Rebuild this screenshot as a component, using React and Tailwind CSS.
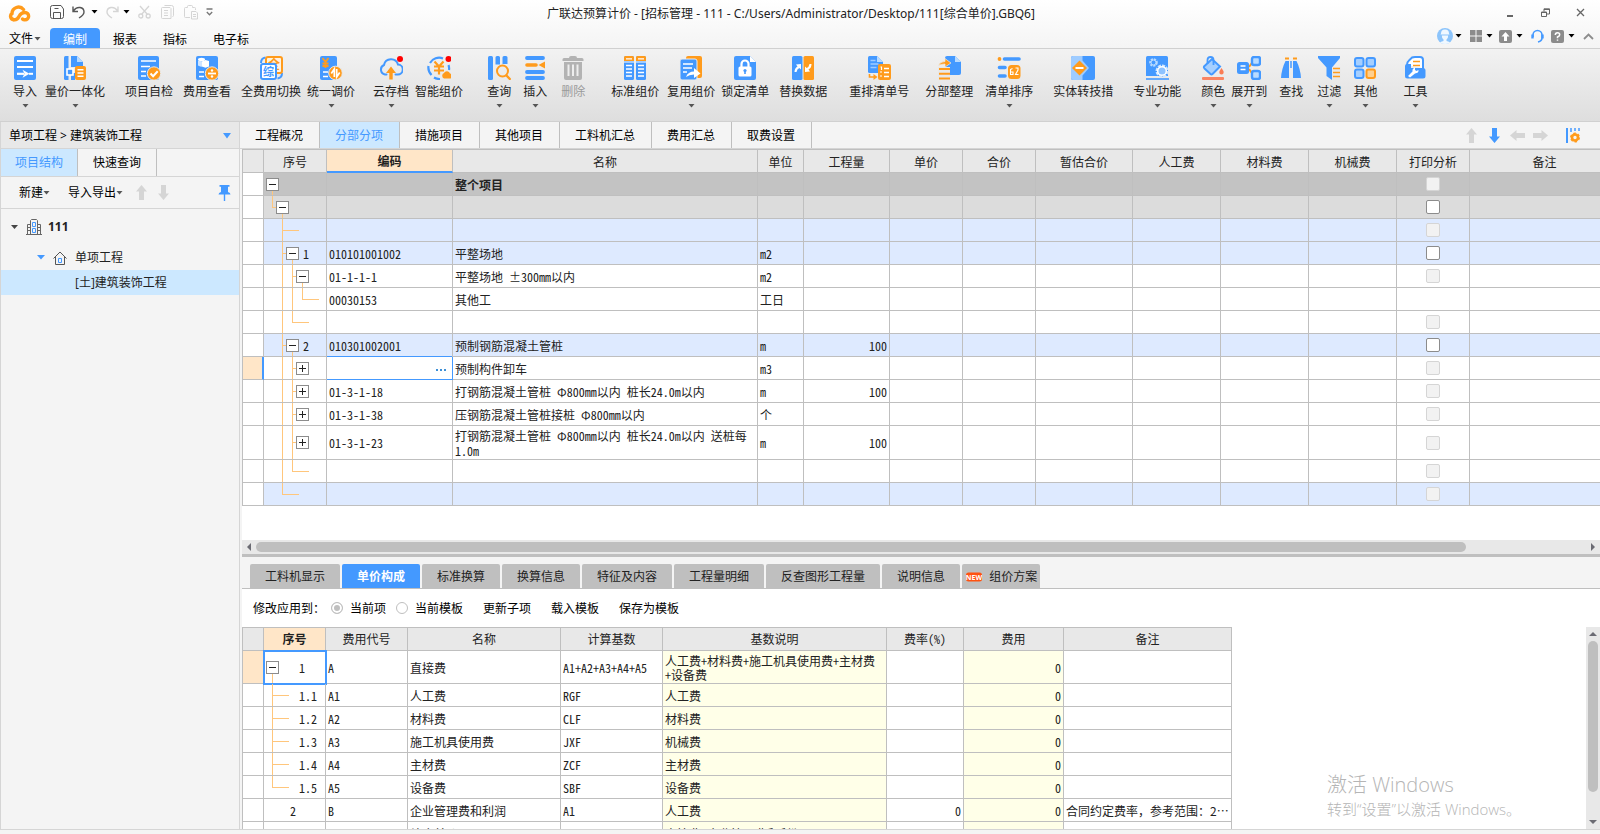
import React, { useState } from 'react'

const B = "#4499ff";
const O = "#ff9b1c";

// small down triangle under / beside buttons
const Caret = ({ className = "text-[#555]" }) => (
  <svg className={className} width="7" height="4" viewBox="0 0 7 4"><path d="M0.5 0h6L3.5 3.6z" fill="currentColor" /></svg>
)

const icons = {
  import: (
    <>
      <rect x="1" y="0" width="22" height="24" rx="2" fill={B} />
      <path d="M4 5h16M4 11h16" stroke="#fff" strokeWidth="1.8" />
      <path d="M4 17.8h7" stroke="#fff" strokeWidth="2.2" />
      <path d="M9.5 13.8l7 4-7 4 2-4z" fill="#fff" />
      <path d="M16 17.8h4" stroke="#fff" strokeWidth="2" />
    </>
  ),
  combine: (
    <>
      <path d="M1 1.5Q1 0 2.5 0H5.5V24H2.5Q1 24 1 22.5z" fill={B} />
      <path d="M8 0h6l6 6v5H8z" fill={B} />
      <path d="M14 0v6h6z" fill="#b9dbff" />
      <path d="M8 17h4v7H8z" fill={B} />
      <rect x="4" y="13" width="6" height="6" fill={B} stroke="#fff" strokeWidth="1.6" />
      <rect x="12" y="10" width="11" height="14" rx="2" fill={O} />
      <path d="M14.5 13.8h6M14.5 17h6M14.5 20.2h6" stroke="#fff" strokeWidth="1.6" />
    </>
  ),
  check: (
    <>
      <rect x="1" y="0" width="21" height="24" rx="2" fill={B} />
      <path d="M4 5h15M4 10.5h9M4 15.5h5M4 20h5" stroke="#fff" strokeWidth="1.6" />
      <circle cx="17" cy="17.5" r="6.7" fill={O} stroke="#e8e8e8" strokeWidth="1" />
      <path d="M13.5 17.5l2.6 2.7 4.6-5" stroke="#fff" strokeWidth="2" fill="none" />
    </>
  ),
  cost: (
    <>
      <rect x="1" y="0" width="22" height="24" rx="2" fill={B} />
      <ellipse cx="6.5" cy="3.5" rx="3.5" ry="1.8" fill="#fff" />
      <path d="M3 4.5v5q3 2 5 .5V5.5z" fill="#cfe5ff" />
      <path d="M7 5.5l3.5-1.5 3.5 1v5.5l-3.5 1.2L7 10.5z" fill="#fff" />
      <path d="M4 16h5M4 20.5h5" stroke="#fff" strokeWidth="1.6" />
      <circle cx="17" cy="17.5" r="6.7" fill={O} stroke="#e8e8e8" />
      <path d="M13 17.5h8" stroke="#fff" strokeWidth="1.8" />
      <circle cx="17" cy="14.5" r="1.2" fill="#fff" /><circle cx="17" cy="20.5" r="1.2" fill="#fff" />
    </>
  ),
  swap: (
    <>
      <path d="M2 7Q2 2 6.5 1.5" stroke={B} strokeWidth="2" fill="none" />
      <path d="M23 17Q23 22 18.5 22.5" stroke={B} strokeWidth="2" fill="none" />
      <rect x="7" y="1" width="16" height="16" rx="2" fill="#fff3e0" stroke={O} strokeWidth="2" />
      <text x="15" y="13" fontSize="12" fontWeight="700" fill={O} textAnchor="middle">全</text>
      <rect x="2" y="8" width="15" height="15" rx="2" fill="#fff" stroke={B} strokeWidth="2" />
      <text x="9.5" y="19.5" fontSize="11" fontWeight="700" fill={B} textAnchor="middle">综</text>
    </>
  ),
  adjust: (
    <>
      <rect x="1" y="0" width="17" height="24" rx="2" fill={B} />
      <path d="M3.5 2l3 4 3-4M6.5 6v6M3.5 7.5h6M3.5 10h6" stroke={O} strokeWidth="1.8" fill="none" />
      <path d="M4 16h5M4 20.5h5" stroke="#fff" strokeWidth="1.6" />
      <circle cx="16.5" cy="17" r="6.8" fill={O} stroke="#e8e8e8" />
      <path d="M15.3 21v-8l-3 4.5M17.7 13v8l3-4.5" stroke="#fff" strokeWidth="1.7" fill="none" />
    </>
  ),
  cloud: (
    <>
      <path d="M7.5 18.5H6A5 5 0 0 1 5 9 7.2 7.2 0 0 1 19 8.5 5 5 0 0 1 18.5 18.5H16.5" stroke={B} strokeWidth="2" fill="none" strokeLinecap="round" />
      <path d="M12 10.5l5 6.5h-3.3V23.5h-3.4V17H7z" fill={O} />
      <circle cx="21" cy="3" r="3" fill="#f00" />
    </>
  ),
  smart: (
    <>
      <path d="M16 2.5A10.5 10.5 0 0 0 3 7M1.5 10a10.5 10.5 0 0 0 3 9M7 21.5a10.5 10.5 0 0 0 6 1.5M21.5 9a10 10 0 0 1 .5 5" stroke={B} strokeWidth="2.2" fill="none" />
      <path d="M7.5 5.5l4.5 5 4.5-5M12 10.5V18.5M7 10.5h10M7 14.5h10" stroke={O} strokeWidth="2.2" fill="none" />
      <path d="M17 22.5a3 3 0 0 1 0-5.5 3.2 3.2 0 0 1 6 .5 2.6 2.6 0 0 1 .5 5z" fill={O} />
      <circle cx="21.5" cy="3" r="3" fill="#f00" />
    </>
  ),
  query: (
    <>
      <rect x="1" y="0" width="5" height="24" rx="1.5" fill={B} />
      <path d="M8.5 1.5Q8.5 0 10 0h1.5Q13 0 13 1.5V8.5H8.5zM15.5 1.5Q15.5 0 17 0h2Q20.5 0 20.5 1.5V8H15.5z" fill={B} />
      <circle cx="15.5" cy="15" r="5.5" fill="none" stroke={O} strokeWidth="2" />
      <path d="M19.5 19.5l3.3 3.5" stroke={O} strokeWidth="2.4" strokeLinecap="round" />
    </>
  ),
  insert: (
    <>
      <path d="M4 2h16M4 16h16M4 22h16" stroke={B} strokeWidth="3.8" strokeLinecap="round" />
      <path d="M4 9h9" stroke={O} strokeWidth="3.6" strokeLinecap="round" />
      <path d="M22 5.5v7L15.5 9z" fill={O} />
    </>
  ),
  trash: (
    <>
      <path d="M8 2q0-2 2-2h4q2 0 2 2h5q1.5 0 1.5 1.5V5h-21V3.5Q1.5 2 3 2z" fill="#b3b3b3" />
      <path d="M3 6h18v16q0 2-2 2H5q-2 0-2-2z" fill="#b3b3b3" />
      <path d="M7.5 8.5V20M12 8.5V20M16.5 8.5V20" stroke="#eee" strokeWidth="2" />
    </>
  ),
  standard: (
    <>
      <rect x="1" y="0" width="10" height="24" rx="1.5" fill={B} />
      <rect x="13" y="0" width="10" height="24" rx="1.5" fill={B} />
      <path d="M1 5V1.5Q1 0 2.5 0h7Q11 0 11 1.5V5zM13 5V1.5Q13 0 14.5 0h7Q23 0 23 1.5V5z" fill={O} />
      <path d="M3 2.8h6M15 2.8h6M1 6h10M13 6h10" stroke="#fff" strokeWidth="1.2" />
      <path d="M3 9.5h6M3 13h6M3 16.5h6M3 20h6M15 9.5h6M15 13h6M15 16.5h6M15 20h6" stroke="#fff" strokeWidth="1.5" />
    </>
  ),
  reuse: (
    <>
      <rect x="7" y="0" width="16" height="22" rx="2" fill={O} />
      <rect x="1" y="3" width="17" height="21" rx="2" fill={B} stroke="#ececec" strokeWidth="1" />
      <path d="M4 8h10M4 12h9M4 16h4" stroke="#fff" strokeWidth="1.6" />
      <path d="M7 21q2-5.5 8-5.5V12l6.5 5.5L15 22v-3.5q-5 0-8 2.5z" fill="#fff" />
    </>
  ),
  lock: (
    <>
      <path d="M1 2q0-2 2-2h14l6 6v16q0 2-2 2H3q-2 0-2-2z" fill={B} />
      <path d="M17 0v6h6z" fill="#fff" />
      <rect x="5.5" y="10.5" width="13" height="10" rx="1.5" fill="#fff" />
      <path d="M8.5 11V8a3.5 3.5 0 0 1 7 0v3" stroke="#fff" strokeWidth="2.2" fill="none" />
      <circle cx="12" cy="14.5" r="1.6" fill={B} /><path d="M12 15v3" stroke={B} strokeWidth="1.6" />
    </>
  ),
  replace: (
    <>
      <rect x="1" y="0" width="10.5" height="24" rx="1.5" fill={B} />
      <rect x="12.5" y="0" width="10.5" height="24" rx="1.5" fill={O} />
      <path d="M3.5 16q0-4 3-5.5L5 8.5l5-.5v5.5L8.3 12Q6 13 5.5 16z" fill="#fff" />
      <path d="M20.5 8q0 4-3 5.5l1.5 2-5 .5v-5.5l1.7 1.5Q18 11 18.5 8z" fill="#fff" />
    </>
  ),
  reorder: (
    <>
      <path d="M1 1.5Q1 0 2.5 0H10l6 6v11H2.5Q1 17 1 15.5z" fill={B} />
      <path d="M10 0v6h6z" fill="#b9dbff" />
      <path d="M3.5 4.5h5M3.5 8h8M3.5 11.5h6" stroke="#9fccff" strokeWidth="1.6" />
      <path d="M2.5 18v3h6" stroke={O} strokeWidth="1.6" fill="none" /><path d="M6.5 18l4 3-4 3z" fill={O} />
      <rect x="11" y="8" width="13" height="16" rx="2" fill={O} />
      <path d="M17 12.5h5M17 16.5h5M17 20.5h5" stroke="#fff" strokeWidth="1.4" />
      <path d="M13.5 11h1v3M13 16h2M13 20h2" stroke="#fff" strokeWidth="1.2" fill="none" />
    </>
  ),
  arrange: (
    <>
      <path d="M8 2q0-2 2-2h8l6 6v11q0 2-2 2H10q-2 0-2-2z" fill={B} />
      <path d="M18 0v6h6z" fill="#b9dbff" />
      <path d="M1 11h12v13H1z" fill="#e8e8e8" />
      <path d="M1.5 9.5Q3 5.5 8 5.5V2.5l6 4.5-6 4V8Q4 8 1.5 9.5z" fill={O} stroke="#ececec" strokeWidth=".7" />
      <path d="M2 13h11M2 17.8h11M2 22.5h11" stroke={O} strokeWidth="1.9" />
    </>
  ),
  sort: (
    <>
      <circle cx="2.5" cy="3" r="1.9" fill={O} />
      <path d="M7.5 3H22" stroke={B} strokeWidth="3.6" strokeLinecap="round" />
      <path d="M2.5 11.5h5.5M2.5 20h5.5" stroke={B} strokeWidth="3.6" strokeLinecap="round" />
      <rect x="11" y="9" width="12.500" height="14" rx="3.500" fill={O} />
      <path d="M15.500 12.500l-2 1v5h2.500v-2.500h-2.500M18.500 12h2.500v2l-2.500 4.500h3" stroke="#fff" strokeWidth="1.100" fill="none" />
    </>
  ),
  convert: (
    <>
      <rect x="0" y="0" width="24" height="24" rx="2" fill={B} />
      <path d="M0 2q0-2 2-2h9.5v4.500L18 12l-6.500 7.500V24H2q-2 0-2-2z" fill="#9fccff" />
      <path d="M8.500 4.500l7.500 7.500-7.500 7.500L1 12z" fill={O} />
      <path d="M4.500 12h8" stroke="#fff" strokeWidth="2" />
    </>
  ),
  pro: (
    <>
      <path d="M1 1.5Q1 0 2.5 0h19Q23 0 23 1.5V20H1z" fill={B} />
      <circle cx="8.5" cy="6.5" r="3.3" fill="none" stroke="#b9dbff" strokeWidth="2" strokeDasharray="2.2 .9" />
      <circle cx="8.5" cy="6.5" r="2.5" fill="none" stroke="#b9dbff" />
      <circle cx="17" cy="15" r="5.5" fill={B} stroke="#cfe5ff" strokeWidth="2" strokeDasharray="3.2 1" />
      <circle cx="17" cy="15" r="4.3" fill="#8dc2ff" stroke="#fff" strokeWidth="1.5" />
      <path d="M1 23h23" stroke={B} strokeWidth="1.6" />
    </>
  ),
  color: (
    <>
      <path d="M3 10.5L11 3l8 7.5-7.5 7.5q-1 1-2 0L3.5 12.5q-1-1-.5-2z" fill="#a5cfff" stroke={B} strokeWidth="2" />
      <path d="M6.5 8V4q0-3 3-3t3 3v5" stroke={B} strokeWidth="1.8" fill="none" />
      <path d="M20.5 12q2.2 3 2.2 4.2a2.2 2.2 0 0 1-4.4 0q0-1.2 2.200-4.200z" fill="#fa7c55" />
      <rect x="1" y="21" width="22" height="3" rx="1" fill="#fa8462" />
    </>
  ),
  expand: (
    <>
      <path d="M12 11L17 4M12 13l5 7" stroke={O} strokeWidth="2" />
      <rect x="0" y="6" width="12" height="12" rx="2.5" fill={B} />
      <path d="M3.5 10h5M3.5 13.5h5" stroke="#fff" strokeWidth="1.6" />
      <rect x="15" y="1" width="8" height="8" rx="2" fill="#b9dbff" stroke={B} strokeWidth="2.4" />
      <rect x="15" y="15" width="8" height="8" rx="2" fill="#b9dbff" stroke={B} strokeWidth="2.4" />
    </>
  ),
  find: (
    <>
      <path d="M6 2.500h4M14 2.500h4" stroke={O} strokeWidth="2" />
      <path d="M6.500 5H10V22H2Q2.500 13 6.500 5zM17.500 5H14V22H22Q21.500 13 17.500 5z" fill={B} />
      <path d="M12 5v7" stroke={B} strokeWidth="1.5" />
    </>
  ),
  filter: (
    <>
      <path d="M1 0h22v2L15 11.5V24l-5.5-4V11.5L1 2z" fill={B} />
      <path d="M15.5 11h8v13h-8z" fill="#e8e8e8" />
      <path d="M16 12.5h7M16 16.5h7M16 20.5h7" stroke={O} strokeWidth="1.7" />
    </>
  ),
  other: (
    <>
      <rect x="2" y="2" width="8.5" height="8.5" rx="2" fill="#a5cfff" stroke={B} strokeWidth="2" />
      <rect x="13.5" y="2" width="8.5" height="8.5" rx="2" fill="#a5cfff" stroke={B} strokeWidth="2" />
      <rect x="2" y="13.5" width="8.5" height="8.5" rx="2" fill="#a5cfff" stroke={B} strokeWidth="2" />
      <rect x="13.5" y="13.5" width="8.5" height="8.5" rx="2" fill="#ffd08f" stroke={O} strokeWidth="2" />
    </>
  ),
  tools: (
    <>
      <path d="M4 9Q4 6 6 4.5L9 1.5Q10 1 12 1h5q3 0 3 3v8h-1" stroke={B} strokeWidth="2" fill="#fff" />
      <path d="M10 5.5h7M10 9.5h7" stroke={O} strokeWidth="1.7" />
      <path d="M2 10q0-2 2-2h4v4h12q2.5 0 2.5 2.5V20q0 2.5-2.5 2.5H4.5Q2 22.5 2 20z" fill={B} />
      <path d="M5 20l4.5-4.500q-.5-3 2.500-4v2.500l1.500 1 2-1q.5 3-3.500 3.500L7 21.500z" fill="#fff" />
    </>
  ),
}

const ribbon = [
  { label: "导入", icon: "import", caret: true, gap: "" },
  { label: "量价一体化", icon: "combine", caret: true, gap: "ml-2" },
  { label: "项目自检", icon: "check", gap: "ml-5" },
  { label: "费用查看", icon: "cost", gap: "ml-2.5" },
  { label: "全费用切换", icon: "swap", gap: "ml-2.5" },
  { label: "统一调价", icon: "adjust", caret: true, gap: "ml-1.5" },
  { label: "云存档", icon: "cloud", caret: true, gap: "ml-4.5" },
  { label: "智能组价", icon: "smart", gap: "ml-1.5" },
  { label: "查询", icon: "query", caret: true, gap: "ml-6" },
  { label: "插入", icon: "insert", caret: true, gap: "ml-3" },
  { label: "删除", icon: "trash", gap: "ml-3.5", disabled: true },
  { label: "标准组价", icon: "standard", gap: "ml-6.5" },
  { label: "复用组价", icon: "reuse", caret: true, gap: "ml-2" },
  { label: "锁定清单", icon: "lock", gap: "ml-1.5" },
  { label: "替换数据", icon: "replace", gap: "ml-2.5" },
  { label: "重排清单号", icon: "reorder", gap: "ml-5.5" },
  { label: "分部整理", icon: "arrange", gap: "ml-4" },
  { label: "清单排序", icon: "sort", caret: true, gap: "ml-3" },
  { label: "实体转技措", icon: "convert", gap: "ml-5" },
  { label: "专业功能", icon: "pro", caret: true, gap: "ml-5" },
  { label: "颜色", icon: "color", caret: true, gap: "ml-5" },
  { label: "展开到", icon: "expand", caret: true, gap: "ml-1.5" },
  { label: "查找", icon: "find", gap: "ml-3" },
  { label: "过滤", icon: "filter", caret: true, gap: "ml-3.5" },
  { label: "其他", icon: "other", caret: true, gap: "ml-3" },
  { label: "工具", icon: "tools", caret: true, gap: "ml-6.5" },
]

const mainTabs = ["工程概况", "分部分项", "措施项目", "其他项目", "工料机汇总", "费用汇总", "取费设置"];
const bottomTabs = ["工料机显示", "单价构成", "标准换算", "换算信息", "特征及内容", "工程量明细", "反查图形工程量", "说明信息", "组价方案"];

// box: x of the expander, v: vertical guide lines [x, part], h: [x1, x2]
const billRows = [
  { bg: "bg-[#c3c3c3]", box: 2, sign: "-", v: [[8, "low"]], name: "整个项目", bold: true, check: "off" },
  { bg: "bg-[#dcdcdc]", box: 12, sign: "-", v: [[8, "up"], [18, "low"]], h: [8, 12], check: "on" },
  { bg: "bg-[#deeaff]", v: [[18, "full"]], h: [18, 35], check: "off" },
  { bg: "bg-[#deeaff]", box: 22, sign: "-", v: [[18, "full"], [28, "low"]], h: [18, 22], no: "1", code: "010101001002", name: "平整场地", unit: "m2", check: "on" },
  { box: 32, sign: "-", v: [[18, "full"], [28, "full"], [38, "low"]], h: [28, 32], code: "01-1-1-1", name: "平整场地 ±300mm以内", unit: "m2", check: "off" },
  { v: [[18, "full"], [28, "full"], [38, "up"]], h: [38, 55], code: "00030153", name: "其他工", unit: "工日" },
  { v: [[18, "full"], [28, "up"]], h: [28, 45], check: "off" },
  { bg: "bg-[#deeaff]", box: 22, sign: "-", v: [[18, "full"], [28, "low"]], h: [18, 22], no: "2", code: "010301002001", name: "预制钢筋混凝土管桩", unit: "m", qty: "100", check: "on" },
  { box: 32, sign: "+", v: [[18, "full"], [28, "full"]], h: [28, 32], name: "预制构件卸车", unit: "m3", check: "off", current: true },
  { box: 32, sign: "+", v: [[18, "full"], [28, "full"]], h: [28, 32], code: "01-3-1-18", name: "打钢筋混凝土管桩 Φ800mm以内 桩长24.0m以内", unit: "m", qty: "100", check: "off" },
  { box: 32, sign: "+", v: [[18, "full"], [28, "full"]], h: [28, 32], code: "01-3-1-38", name: "压钢筋混凝土管桩接桩 Φ800mm以内", unit: "个", check: "off" },
  { tall: true, box: 32, sign: "+", v: [[18, "full"], [28, "full"]], h: [28, 32], code: "01-3-1-23", name: "打钢筋混凝土管桩 Φ800mm以内 桩长24.0m以内 送桩每1.0m", unit: "m", qty: "100", check: "off" },
  { v: [[18, "full"], [28, "up"]], h: [28, 45], check: "off" },
  { bg: "bg-[#deeaff]", v: [[18, "up"]], h: [18, 35], check: "off" },
]

const feeRows = [
  { tall: true, box: 2, v: [[8, "low"]], no: "1", code: "A", name: "直接费", base: "A1+A2+A3+A4+A5", desc: "人工费+材料费+施工机具使用费+主材费+设备费", fee: "0", current: true },
  { v: [[8, "full"]], h: [8, 25], no: "1.1", code: "A1", name: "人工费", base: "RGF", desc: "人工费", fee: "0" },
  { v: [[8, "full"]], h: [8, 25], no: "1.2", code: "A2", name: "材料费", base: "CLF", desc: "材料费", fee: "0" },
  { v: [[8, "full"]], h: [8, 25], no: "1.3", code: "A3", name: "施工机具使用费", base: "JXF", desc: "机械费", fee: "0" },
  { v: [[8, "full"]], h: [8, 25], no: "1.4", code: "A4", name: "主材费", base: "ZCF", desc: "主材费", fee: "0" },
  { v: [[8, "up"]], h: [8, 25], no: "1.5", code: "A5", name: "设备费", base: "SBF", desc: "设备费", fee: "0" },
  { no: "2", code: "B", name: "企业管理费和利润", base: "A1", desc: "人工费", rate: "0", fee: "0", note: "合同约定费率，参考范围：2…" },
  { no: "3", code: "C", name: "综合单价", base: "A+B", desc: "直接费+企业管理费和利润", fee: "0" },
]

const TreeLines = ({ v = [], h }) => (
  <svg className="absolute inset-0 w-full h-full" stroke="#ffc67c" shapeRendering="crispEdges">
    {v.map(([x, part]) => (
      <line key={x} x1={x} x2={x} y1={part === "low" ? "50%" : "0"} y2={part === "up" ? "50%" : "110%"} />
    ))}
    {h && <line x1={h[0]} x2={h[1]} y1="50%" y2="50%" />}
  </svg>
)

const Expander = ({ sign }) => (
  <button aria-label="展开" className="block w-[13px] h-[13px] bg-white border border-[#8c8c8c]">
    <svg width="11" height="11" stroke="#222" shapeRendering="crispEdges">
      <path d={sign === "+" ? "M2 5.5h7M5.5 2v7" : "M2 5.5h7"} />
    </svg>
  </button>
)

const Arrow = ({ className }) => (
  <svg className={className} width="15" height="15" viewBox="0 0 15 15"><path d="M7.5 0L13 6.5H10V15H5V6.5H2z" fill="currentColor" /></svg>
)

const th = "border-r border-b border-[#bfbfbf] font-normal text-center p-0";
const td = "border-r border-b border-[#bfbfbf] px-0.5 py-0 align-middle";
const feeTd = "border-r border-b border-[#bfbfbf] px-0.5 pt-0.5 pb-0 align-middle";

const TitleBar = () => (
  <div className="relative h-7 flex items-center pl-2 pr-[15px]">
    <svg width="23" height="18" viewBox="0 0 23 18" fill="none" stroke={O} strokeWidth="3.4" strokeLinecap="round">
      <path d="M5.5 14.5A3.3 3.3 0 0 1 4 8.5 6.5 6.5 0 0 1 15.5 4.5" />
      <path d="M5.5 14.8Q9 15.5 11 11.5T17 7.5A3.6 3.6 0 1 1 17 14.8Q15.5 15 14.5 14" />
    </svg>
    <div className="flex items-center -mt-1 ml-[19px] text-[#555]">
      <button aria-label="保存"><svg width="14" height="14" viewBox="0 0 14 14" fill="none" stroke="currentColor"><path d="M.5 2.5V11.5q0 2 2 2h9q2 0 2-2V4L11 .5H2.5q-2 0-2 2zM3.5 13.5V7.5h7v6M4.5 3.5h4" /></svg></button>
      <button aria-label="撤销" className="ml-2"><svg width="13" height="14" viewBox="0 0 13 14" fill="none" stroke="currentColor" strokeWidth="1.4"><path d="M1 1.500v5h5M1.200 6.200Q4 2 8 2.500T12 7q0 3-5 6" /></svg></button>
      <button aria-label="撤销列表" className="ml-1.5"><Caret className="text-black" /></button>
      <button aria-label="恢复" className="ml-2 text-[#d5d5d5]"><svg width="13" height="14" viewBox="0 0 13 14" fill="none" stroke="currentColor" strokeWidth="1.4"><path d="M12 1.500v5H7M11.800 6.200Q9 2 5 2.500T1 7q0 3 5 6" /></svg></button>
      <button aria-label="恢复列表" className="ml-1"><Caret className="text-black" /></button>
      <button aria-label="剪切" className="ml-2 text-[#d5d5d5]"><svg width="13" height="14" viewBox="0 0 13 14" fill="none" stroke="currentColor" strokeWidth="1.3"><path d="M2 1l7.5 8.5M11 1L3.5 9.5" /><circle cx="2.8" cy="11" r="2" /><circle cx="10.2" cy="11" r="2" /></svg></button>
      <button aria-label="复制" className="ml-2.5 text-[#d5d5d5]"><svg width="13" height="14" viewBox="0 0 13 14" fill="none" stroke="currentColor"><path d="M3.5.5h7q2 0 2 2v8q0 1-1 1M1.5 2.5h7.5l1 1v10h-8.5q-1 0-1-1v-9q0-1 1-1zM3 5.5h4M3 8h4M3 10.5h4" /></svg></button>
      <button aria-label="粘贴" className="ml-2.5 text-[#d5d5d5]"><svg width="14" height="15" viewBox="0 0 14 15" fill="none" stroke="currentColor"><path d="M6 12.5H1.5q-1 0-1-1v-8q0-1 1-1H3.5V1.5q0-1 1-1h3q1 0 1 1v1h2q1 0 1 1V5M7.5 6.5h4.5l1.5 1.5v6H7.5zM9 9.5h3M9 11.5h3" /></svg></button>
      <button aria-label="自定义" className="ml-2"><svg width="7" height="8" viewBox="0 0 7 8" fill="none" stroke="#777"><path d="M.5 1h6M.8 4l2.7 2.8L6.2 4" strokeWidth="1.3" /></svg></button>
    </div>
    <h1 className="flex-1 min-w-0 truncate pl-[334px] text-[12px] text-[#222] font-['Noto_Sans','Noto_Sans_CJK_SC',sans-serif]">广联达预算计价 - [招标管理 - 111 - C:/Users/Administrator/Desktop/111[综合单价].GBQ6]</h1>
    <div className="flex items-center -mt-1 gap-[26px] text-[#666]">
      <button aria-label="最小化"><svg width="11" height="11" viewBox="0 0 11 11"><path d="M3 9h6" stroke="currentColor" strokeWidth="2" /></svg></button>
      <button aria-label="还原"><svg width="9" height="9" viewBox="0 0 9 9" fill="none" stroke="currentColor"><path d="M.5 4h5v4.5h-5zM.5 4.5h5M3 3.5V.8h5.500V6H6M3 1.500h5.500" /></svg></button>
      <button aria-label="关闭"><svg width="9" height="9" viewBox="0 0 9 9" stroke="currentColor" strokeWidth="1.3"><path d="M1 1l7 7M8 1l-7 7" /></svg></button>
    </div>
  </div>
)

const MenuBar = () => (
  <div className="h-5 flex items-stretch text-[12px] leading-5">
    <button className="flex items-center w-[50px] pl-[9px] pt-0.5 gap-px">文件<Caret /></button>
    <button className="px-[13px] pt-0.5 bg-[#4499ff] text-white rounded-t-sm">编制</button>
    <button className="px-[13px] pt-0.5">报表</button>
    <button className="px-[13px] pt-0.5">指标</button>
    <button className="px-[13px] pt-0.5">电子标</button>
    <div className="flex-1 flex items-center justify-end h-full pb-1 pr-1.5 text-[#8c8c8c]">
      <button aria-label="用户"><svg width="16" height="16" viewBox="0 0 16 16"><circle cx="8" cy="8" r="8" fill="#8cc4fb" /><path d="M4 5.5a4 4 0 0 1 8 0l.5 1h-9zM4.8 7.5h6.4q0 3-1.700 4v1.500q3 .5 3.500 1.500Q8 17.500 3 14.500q.5-1 3.500-1.500V11.500Q4.800 10.500 4.800 7.500z" fill="#f0f8ff" /></svg></button>
      <Caret className="ml-0.5 text-black" />
      <button aria-label="布局" className="ml-2"><svg width="12" height="12" fill="currentColor"><path d="M0 0h5.5v5.5H0zM6.5 0H12v5.5H6.5zM0 6.5h5.5V12H0zM6.5 6.5H12V12H6.5z" /></svg></button>
      <Caret className="ml-1 text-black" />
      <button aria-label="升级" className="ml-1.5"><svg width="13" height="13"><rect width="13" height="13" rx="2" fill="currentColor" /><path d="M6.5 2l4 4.5H8V11H5V6.5H2.5z" fill="#fff" /></svg></button>
      <Caret className="ml-1 text-black" />
      <button aria-label="客服" className="ml-2"><svg width="13" height="14" viewBox="0 0 13 14" fill="none" stroke={B} strokeWidth="1.6"><path d="M2 8V6a4.5 4.5 0 0 1 9 0v3q0 3-4 4" /><path d="M1.5 5.5v4M11.5 5.5v4" strokeWidth="2.4" /></svg></button>
      <button aria-label="帮助" className="ml-[7px]"><svg width="13" height="13" fill="none"><rect width="13" height="13" rx="2" fill="currentColor" /><path d="M4.3 5q0-2.3 2.2-2.3T8.7 4.7Q8.7 6 6.5 7v1.2M6.5 9.5v1.3" stroke="#fff" strokeWidth="1.5" /></svg></button>
      <Caret className="ml-1 text-black" />
      <button aria-label="收起" className="ml-2"><svg width="11" height="7" fill="none" stroke="currentColor" strokeWidth="1.8"><path d="M1 6l4.5-4.5L10 6" /></svg></button>
    </div>
  </div>
)

const Sidebar = () => (
  <aside className="w-60 shrink-0 bg-[#f4f4f4] border-x border-[#d5d5d5] flex flex-col">
    <button className="h-[27px] flex items-center justify-between bg-[#e8e8e8] border-b border-[#d5d5d5] px-2 pt-0.5">
      <span>单项工程 &gt; 建筑装饰工程</span>
      <svg width="8" height="6"><path d="M0 0h8L4 5.5z" fill={B} /></svg>
    </button>
    <div className="h-7 flex border-b border-[#d5d5d5]">
      <button className="px-3.5 bg-[#cce8ff] text-[#4499ff] border-r border-[#bfbfbf]">项目结构</button>
      <button className="px-[15px] border-r border-[#bfbfbf]">快速查询</button>
    </div>
    <div className="h-8 flex items-center border-b border-[#d5d5d5] pl-[18px] pr-2">
      <button className="flex items-center">新建<Caret /></button>
      <button className="flex items-center ml-[18px]">导入导出<Caret /></button>
      <Arrow className="ml-[11px] text-[#d5d5d5]" />
      <Arrow className="ml-[7px] text-[#d5d5d5] rotate-180" />
      <button aria-label="固定" className="ml-auto"><svg width="13" height="16" fill={B}><path d="M1.5 0h10v1.8H10V7q2.5.8 2.5 2.5H.5Q.5 7.8 3 7V1.8H1.5zM5.8 9.5h1.4V16H5.8z" /></svg></button>
    </div>
    <ul className="text-[#222]">
      <li className="h-9 flex items-center pl-2.5">
        <svg width="7" height="4"><path d="M0 0h7L3.5 4z" fill="#444" /></svg>
        <svg className="ml-2" width="16" height="16" viewBox="0 0 16 16" fill="none" stroke="#666"><path d="M0 15.5h16M4.5 15V1.5l1-1h5l1 1V15M1.5 15V5.5H4M14.5 15V5.5H12M1.5 8.5h2.5M1.5 11.5h2.5M12 8.5h2.5M12 11.5h2.5" /><path d="M6.5 3.5h3v4h-3zM6.5 9.5h3v4h-3z" stroke={B} /></svg>
        <b className="ml-1.5">111</b>
      </li>
      <li className="h-[25px] flex items-center pl-9">
        <svg width="8" height="5"><path d="M0 0h8L4 4.5z" fill={B} /></svg>
        <svg className="ml-2" width="14" height="14" viewBox="0 0 14 14" fill="none" stroke="#555"><path d="M.5 7.5L7 1l6.5 6.5M2.5 6v7.5h9V6" /><path d="M5.5 7.5h3v4h-3z" stroke={B} /></svg>
        <span className="ml-2">单项工程</span>
      </li>
      <li className="h-[25px] flex items-center bg-[#cce8ff] pl-[74px]">[土]建筑装饰工程</li>
    </ul>
  </aside>
)

const BillTable = () => (
  <table className="table-fixed w-[calc(100%+20px)] border-separate border-spacing-0 border-l border-t border-[#bfbfbf] bg-white">
    <colgroup>
      <col className="w-[21px]" /><col className="w-[63px]" /><col className="w-[126px]" /><col className="w-[305px]" />
      <col className="w-[46px]" /><col className="w-[86px]" /><col className="w-[73px]" /><col className="w-[73px]" />
      <col className="w-[97px]" /><col className="w-[88px]" /><col className="w-[88px]" /><col className="w-[88px]" />
      <col className="w-[73px]" /><col />
    </colgroup>
    <thead>
      <tr className="h-[23px] bg-[#e8e8e8]">
        <th className={th}></th>
        <th className={th}>序号</th>
        <th className="border-r border-b-2 border-r-[#bfbfbf] border-b-[#4499ff] bg-[#ffe6c8] font-bold text-center p-0">编码</th>
        {["名称", "单位", "工程量", "单价", "合价", "暂估合价", "人工费", "材料费", "机械费", "打印分析", "备注"].map((t) => (
          <th key={t} className={th}>{t}</th>
        ))}
      </tr>
    </thead>
    <tbody>
      {billRows.map((r, i) => (
        <tr key={i} className={`${r.tall ? "h-[34px]" : "h-[23px]"} ${r.bg || "bg-white"}`}>
          <td className={r.current ? "border-r-2 border-b border-r-[#4499ff] border-b-[#bfbfbf] bg-[#ffe6c8]" : `${td} bg-white`}></td>
          <td className="relative border-r border-b border-[#bfbfbf] p-0">
            <TreeLines v={r.v} h={r.h} />
            <div className="relative flex items-center gap-1">
              {r.box !== undefined && <div style={{ marginLeft: r.box }}><Expander sign={r.sign} /></div>}
              {r.no}
            </div>
          </td>
          {r.current ? (
            <td className="border-r border-b border-[#4499ff] shadow-[-1px_-1px_0_#4499ff] text-right pr-1.5">
              <button aria-label="选择" className="align-middle"><svg width="10" height="2" fill="#3d8fd6"><path d="M0 0h2v2H0zM4 0h2v2H4zM8 0h2v2H8z" /></svg></button>
            </td>
          ) : <td className={td}>{r.code}</td>}
          <td className={`${td} ${r.bold ? "font-bold" : ""}`}>{r.name}</td>
          <td className={td}>{r.unit}</td>
          <td className={`${td} text-right`}>{r.qty}</td>
          <td className={td}></td>
          <td className={td}></td>
          <td className={td}></td>
          <td className={td}></td>
          <td className={td}></td>
          <td className={td}></td>
          <td className={td}>
            {r.check && (
              <input type="checkbox" aria-label="打印分析" disabled={r.check === "off"}
                className="appearance-none block mx-auto w-3.5 h-3.5 rounded-xs border border-[#8c8c8c] bg-white disabled:border-[#d5d5d5] disabled:bg-[#f2f2f2]" />
            )}
          </td>
          <td className={td}></td>
        </tr>
      ))}
    </tbody>
  </table>
)

const FeeTable = () => (
  <table className="table-fixed w-[990px] border-separate border-spacing-0 border-l border-t border-[#bfbfbf] bg-white">
    <colgroup>
      <col className="w-[21px]" /><col className="w-[62px]" /><col className="w-[82px]" /><col className="w-[153px]" />
      <col className="w-[102px]" /><col className="w-[224px]" /><col className="w-[77px]" /><col className="w-[100px]" /><col className="w-[168px]" />
    </colgroup>
    <thead>
      <tr className="h-[23px] bg-[#e8e8e8]">
        <th className={th}></th>
        <th className="border-r border-b border-[#bfbfbf] bg-[#ffe6c8] font-bold text-center p-0">序号</th>
        {["费用代号", "名称", "计算基数", "基数说明", "费率(%)", "费用", "备注"].map((t) => (
          <th key={t} className={th}>{t}</th>
        ))}
      </tr>
    </thead>
    <tbody>
      {feeRows.map((r) => (
        <tr key={r.code} className={r.tall ? "h-[33px]" : "h-[23px]"}>
          <td className={`${feeTd} ${r.current ? "bg-[#ffe6c8]" : ""}`}></td>
          <td className={`relative border-r border-b border-[#bfbfbf] p-0 ${r.current ? "outline-2 outline-[#4499ff] -outline-offset-1" : ""}`}>
            <TreeLines v={r.v} h={r.h} />
            <div className="relative flex items-center">
              {r.box !== undefined && <div style={{ marginLeft: r.box }}><Expander sign="-" /></div>}
              <span className={r.box !== undefined ? "pt-0.5 ml-5" : r.h ? "pt-0.5 ml-auto mr-2" : "pt-0.5 ml-[26px]"}>{r.no}</span>
            </div>
          </td>
          <td className={feeTd}>{r.code}</td>
          <td className={feeTd}>{r.name}</td>
          <td className={feeTd}>{r.base}</td>
          <td className={`${feeTd} bg-[#ffffe8]`}>{r.desc}</td>
          <td className={`${feeTd} text-right`}>{r.rate}</td>
          <td className={`${feeTd} bg-[#ffffe8] text-right`}>{r.fee}</td>
          <td className={`${feeTd} whitespace-nowrap overflow-hidden [font-feature-settings:normal]`}>{r.note}</td>
        </tr>
      ))}
    </tbody>
  </table>
)

const App = () => {
  const [tab, setTab] = useState("分部分项");
  const [panel, setPanel] = useState("单价构成");
  const [scope, setScope] = useState("item");

  return (
    <div lang="zh-CN" className="h-screen flex flex-col overflow-hidden bg-[#f4f4f4] text-[12px] leading-4 text-black whitespace-nowrap font-['Open_Sans','Noto_Sans_CJK_SC',sans-serif]">
      <header className="shrink-0">
        <div className="bg-gradient-to-b from-white to-[#f4f4f4]">
          <TitleBar />
          <MenuBar />
        </div>
        <div className="flex items-start h-[74px] pl-[13px] pt-[7px] border-y border-[#d0d0d0] bg-gradient-to-b from-[#f2f2f2] to-[#dedede]">
          {ribbon.map((b) => (
            <button key={b.label} disabled={b.disabled} className={`flex flex-col items-center shrink-0 text-[#222] disabled:text-[#9a9a9a] ${b.gap}`}>
              <svg width="24" height="24" viewBox="0 0 24 24">{icons[b.icon]}</svg>
              <span className="mt-1">{b.label}</span>
              {b.caret && <Caret className="mt-1 text-[#555]" />}
            </button>
          ))}
        </div>
      </header>

      <div className="flex-1 min-h-0 flex">
        <Sidebar />
        <main className="flex-1 min-w-0 flex flex-col">
          <nav className="h-[27px] shrink-0 flex border-b border-[#d5d5d5]">
            {mainTabs.map((t) => (
              <button key={t} onClick={() => setTab(t)}
                className={`pt-0.5 pl-[15px] pr-4 border-r border-[#bfbfbf] ${t === tab ? "bg-[#cce8ff] text-[#4499ff]" : ""}`}>{t}</button>
            ))}
            <div className="ml-auto flex items-center gap-2 pr-5 text-[#d5d5d5]">
              <Arrow />
              <Arrow className="rotate-180 text-[#4499ff]" />
              <Arrow className="-rotate-90" />
              <Arrow className="rotate-90" />
              <svg className="ml-2.5" width="14" height="15"><path d="M1 0v15" stroke={B} strokeWidth="2" /><path d="M5 0v4M9 0v3M13 0v3" stroke={B} strokeWidth="1.5" /><circle cx="9" cy="9.5" r="3" fill="none" stroke={O} strokeWidth="2.6" /><circle cx="9" cy="9.5" r="4.3" fill="none" stroke={O} strokeWidth="1.4" strokeDasharray="2.5 2" /></svg>
            </div>
          </nav>

          <div className="flex-1 min-h-0 ml-0.5 flex flex-col bg-white">
            <div className="flex-1 min-h-0 overflow-hidden leading-[15px] whitespace-normal text-[#222] font-['Noto_Sans_CJK_SC',sans-serif] [font-feature-settings:'hwid']">
              <BillTable />
            </div>

            <div className="h-3.5 shrink-0 flex items-center justify-between px-[5px] bg-[#e8e8e8]">
              <svg width="4" height="8"><path d="M4 0v8L0 4z" fill="#6b6b73" /></svg>
              <div className="flex-1 px-[5px]"><div className="w-[91%] h-2.5 rounded-full bg-[#bfbfbf]"></div></div>
              <svg width="4" height="8"><path d="M0 0v8l4-4z" fill="#6b6b73" /></svg>
            </div>
            <div className="h-[3px] shrink-0 bg-[#bfbfbf]"></div>

            <nav className="shrink-0 flex gap-0.5 pt-[7px] pl-2 bg-[#f4f4f4] border-b border-[#bfbfbf]">
              {bottomTabs.map((t) => (
                <button key={t} onClick={() => setPanel(t)}
                  className={`h-6 flex items-center pt-0.5 rounded-t-xs ${t === "组价方案" ? "pl-1 pr-[3px] gap-[7px]" : "px-[15px]"} ${t === panel ? "bg-[#4499ff] text-white font-bold" : "bg-[#bfbfbf] text-[#222]"}`}>
                  {t === "组价方案" && (
                    <svg width="16" height="10" viewBox="0 0 16 10"><rect width="16" height="9" y=".5" rx="2.5" fill="#ff5210" /><text x="8" y="7.8" fontSize="7" fontWeight="700" textAnchor="middle" fill="#fff">NEW</text></svg>
                  )}
                  {t}
                </button>
              ))}
            </nav>

            <div className="h-[38px] shrink-0 flex items-center pl-[11px] font-['Noto_Sans_CJK_SC',sans-serif]">
              <span>修改应用到：</span>
              <label className="flex items-center gap-[7px] ml-1.5">
                <input type="radio" name="scope" checked={scope === "item"} onChange={() => setScope("item")}
                  className="appearance-none w-3 h-3 rounded-full border border-[#bfbfbf] bg-white checked:bg-[#bfbfbf] checked:shadow-[inset_0_0_0_2px_white]" />
                当前项
              </label>
              <label className="flex items-center gap-[7px] ml-2.5">
                <input type="radio" name="scope" checked={scope === "tpl"} onChange={() => setScope("tpl")}
                  className="appearance-none w-3 h-3 rounded-full border border-[#bfbfbf] bg-white checked:bg-[#bfbfbf] checked:shadow-[inset_0_0_0_2px_white]" />
                当前模板
              </label>
              <button className="ml-5">更新子项</button>
              <button className="ml-5">载入模板</button>
              <button className="ml-5">保存为模板</button>
            </div>

            <div className="relative h-[202px] shrink-0 flex justify-between overflow-hidden">
              <div className="leading-[14px] whitespace-normal text-[#222] font-['Noto_Sans_CJK_SC',sans-serif] [font-feature-settings:'hwid']">
                <FeeTable />
              </div>
              <div className="w-3.5 flex flex-col items-center py-[5px] bg-[#e8e8e8]">
                <svg width="8" height="4" className="shrink-0"><path d="M0 4h8L4 0z" fill="#6b6b73" /></svg>
                <div className="flex-1 py-[5px]"><div className="w-2.5 h-[87%] rounded-full bg-[#bfbfbf]"></div></div>
                <svg width="8" height="4" className="shrink-0"><path d="M0 0h8L4 4z" fill="#6b6b73" /></svg>
              </div>
              <div className="absolute right-[78px] bottom-2.5 w-[195px] text-[#b5b5b5]">
                <p className="text-[20px] leading-7 font-light">激活 Windows</p>
                <p className="text-[15px] leading-5 font-light">转到“设置”以激活 Windows。</p>
              </div>
            </div>
          </div>
        </main>
      </div>
      <footer className="h-[5px] shrink-0 border-t border-[#d5d5d5]"></footer>
    </div>
  )
}

export default App
